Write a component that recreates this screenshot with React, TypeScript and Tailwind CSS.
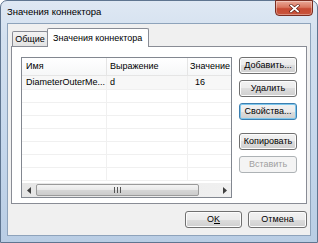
const btn =
  'flex items-center justify-center whitespace-nowrap rounded-[3px] border border-[#707070] bg-[linear-gradient(#f2f2f2_0%,#ebebeb_50%,#dddddd_50%,#cfcfcf_100%)] shadow-[inset_0_0_0_1px_#fcfcfc] text-[9px] text-black leading-none'

function Button({ label, focused, disabled, className }: { label: React.ReactNode; focused?: boolean; disabled?: boolean; className?: string }) {
  if (disabled) {
    return (
      <div className={`flex items-center justify-center whitespace-nowrap rounded-[3px] border border-[#adb2b5] bg-[#f4f4f4] text-[9px] text-[#a0a0a0] leading-none ${className ?? ''}`}>
        {label}
      </div>
    )
  }
  if (focused) {
    return (
      <div className={`flex items-center justify-center whitespace-nowrap rounded-[3px] border border-[#3c7fb1] bg-[linear-gradient(#f2f2f2_0%,#ebebeb_50%,#dddddd_50%,#cfcfcf_100%)] shadow-[inset_0_0_0_1px_#7ec7ec] text-[9px] text-black leading-none ${className ?? ''}`}>
        {label}
      </div>
    )
  }
  return <div className={`${btn} ${className ?? ''}`}>{label}</div>
}

const rows = [
  ['DiameterOuterMe...', 'd', '16'],
  ['', '', ''],
  ['', '', ''],
  ['', '', ''],
  ['', '', ''],
  ['', '', ''],
  ['', '', ''],
  ['', '', ''],
]

export default function App() {
  return (
    <div className="w-[318px] h-[243px] overflow-hidden font-['Liberation_Sans',Arial,sans-serif]">
      {/* window frame */}
      <div className="w-[318px] h-[243px] flex flex-col rounded-t-[7px] border border-[#5f7590] bg-[linear-gradient(180deg,#dfe8f3_0%,#d3e0ef_15%,#c5d7ec_60%,#b9cde4_100%)]">
        {/* title bar */}
        <div className="relative h-[22px] shrink-0">
          <span className="absolute left-[6px] top-[5px] text-[9.5px] leading-[12px] text-black whitespace-nowrap">Значения коннектора</span>
          <div className="absolute right-[4px] top-[-1px] w-[38px] h-[16px] rounded-b-[4px] border border-[#7a2d21] bg-[linear-gradient(180deg,#eaa897_0%,#d9765f_45%,#c74a33_55%,#c9553c_100%)] shadow-[inset_0_0_0_1px_rgba(255,255,255,0.35)] flex items-center justify-center">
            <svg width="11" height="9" viewBox="0 0 11 9">
              <path d="M2 1.5 L9 7.5 M9 1.5 L2 7.5" stroke="#5a1a10" strokeWidth="3" strokeLinecap="square" />
              <path d="M2 1.5 L9 7.5 M9 1.5 L2 7.5" stroke="#ffffff" strokeWidth="1.8" strokeLinecap="square" />
            </svg>
          </div>
        </div>

        {/* client area */}
        <div className="mx-[6px] h-[213px] border border-[#8ea3bb] bg-[#f0f0f0] flex flex-col pl-[3px] pt-[4px]">
          {/* tabs */}
          <div className="flex items-end h-[19px] relative z-10">
            <div className="ml-[1px] w-[36px] h-[15px] mb-px border border-b-0 border-[#898c95] bg-[linear-gradient(#f3f3f3,#e3e3e3)] flex items-center justify-center text-[9px] leading-none text-black rounded-t-[2px] whitespace-nowrap">
              Общие
            </div>
            <div className="w-[102px] h-[19px] border border-b-0 border-[#898c95] bg-white flex items-center pl-[5px] text-[9px] leading-none text-black rounded-t-[2px] -ml-px whitespace-nowrap">
              Значения коннектора
            </div>
          </div>

          {/* tab page */}
          <div className="w-[296px] h-[158px] -mt-px border border-[#898c95] bg-white flex pl-[9px] pt-[10px] gap-[7px]">
            {/* list view */}
            <div className="w-[211px] h-[141px] border border-[#828790] bg-white flex flex-col overflow-hidden">
              <div className="flex h-[18px] shrink-0 border-b border-[#e5e5e5] bg-[linear-gradient(#ffffff,#f6f7f8)] text-[9px] text-black whitespace-nowrap">
                <div className="w-[85px] border-r border-[#e5e5e5] pl-[4px] flex items-center">Имя</div>
                <div className="w-[81px] border-r border-[#e5e5e5] pl-[3px] flex items-center">Выражение</div>
                <div className="flex-1 pl-[2px] flex items-center overflow-hidden">Значение</div>
              </div>
              <div className="flex-1 flex flex-col overflow-hidden">
                {rows.map((r, i) => (
                  <div key={i} className={`flex shrink-0 border-b border-[#f0f0f0] text-[9px] text-black whitespace-nowrap ${i === 0 ? 'bg-[#f7f7f7] h-[14px]' : 'h-[13px]'}`}>
                    <div className="w-[85px] border-r border-[#f0f0f0] pl-[4px] flex items-center overflow-hidden">{r[0]}</div>
                    <div className="w-[81px] border-r border-[#f0f0f0] pl-[3px] flex items-center">{r[1]}</div>
                    <div className="flex-1 pl-[7px] flex items-center">{r[2]}</div>
                  </div>
                ))}
              </div>
              {/* horizontal scrollbar */}
              <div className="h-[14px] shrink-0 flex bg-[linear-gradient(90deg,#e6e6e6,#f0f0f0)]">
                <div className="w-[14px] flex items-center justify-center">
                  <svg width="4" height="7" viewBox="0 0 4 7"><path d="M4 0 L0 3.5 L4 7 Z" fill="#404040" /></svg>
                </div>
                <div className="w-[163px] mt-px mb-px rounded-[2px] border border-[#9a9a9a] bg-[linear-gradient(#f4f4f4_0%,#e8e8e8_50%,#d6d6d6_50%,#cccccc_100%)] flex items-center justify-center">
                  <svg width="7" height="6" viewBox="0 0 7 6">
                    <path d="M0.5 0 V6 M3.5 0 V6 M6.5 0 V6" stroke="#555" strokeWidth="1" />
                  </svg>
                </div>
                <div className="flex-1" />
                <div className="w-[12px] flex items-center justify-center">
                  <svg width="4" height="7" viewBox="0 0 4 7"><path d="M0 0 L4 3.5 L0 7 Z" fill="#404040" /></svg>
                </div>
              </div>
            </div>

            {/* side buttons */}
            <div className="w-[58px] flex flex-col">
              <Button label="Добавить..." className="h-[17px]" />
              <Button label="Удалить" className="h-[17px] mt-[6px]" />
              <Button label="Свойства..." focused className="h-[17px] mt-[6px]" />
              <Button label="Копировать" className="h-[17px] mt-[13px]" />
              <Button label="Вставить" disabled className="h-[17px] mt-[6px]" />
            </div>
          </div>

          {/* dialog buttons */}
          <div className="flex justify-end gap-[6px] mt-[7px] pr-[3px]">
            <Button label={<span>O<span className="underline">K</span></span>} className="w-[57px] h-[17px]" />
            <Button label="Отмена" className="w-[59px] h-[17px]" />
          </div>
        </div>
      </div>
    </div>
  )
}
